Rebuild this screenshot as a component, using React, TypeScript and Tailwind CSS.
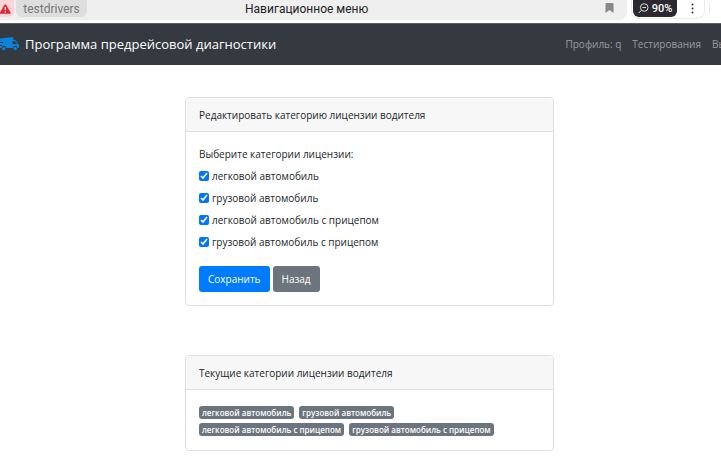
import React from 'react';

const categories = [
  'легковой автомобиль',
  'грузовой автомобиль',
  'легковой автомобиль с прицепом',
  'грузовой автомобиль с прицепом',
];

function BrowserBar() {
  return (
    <div className="flex h-[23px] items-start overflow-hidden bg-white font-[Roboto,sans-serif]">
      <div className="flex h-5 min-w-0 flex-1 items-start rounded-br-lg bg-[#efefef]">
        <div className="flex h-[17px] w-[14px] shrink-0 items-center rounded-br-md bg-[#fdd5d8]">
          <svg width="11" height="10" viewBox="0 0 11 10" className="block" aria-hidden="true">
            <path d="M4.5 0.8 Q5.3 -0.4 6.1 0.8 L10.6 8.4 Q11 9.8 9.8 9.8 H0.8 Q-0.4 9.8 0 8.4 Z" fill="#e32633" />
            <path d="M5.3 3 V6.2 M5.3 7.3 V8.5" stroke="#fff" strokeWidth="1.2" />
          </svg>
        </div>
        <div className="ml-[2px] h-[17px] w-[71px] shrink-0 rounded-b-md bg-[#dedede] text-center text-[12px] leading-[18px] text-[#777]">
          testdrivers
        </div>
        <div className="min-w-0 flex-1 truncate pl-[158px] text-[12px] leading-[18px] text-[#222]">
          Навигационное меню
        </div>
        <button type="button" aria-label="Закладка" className="mt-[3px] mr-[13px] shrink-0">
          <svg width="9" height="10" viewBox="0 0 9 10" className="block">
            <path d="M1.5 0 H7.5 Q8.5 0 8.5 1 V10 L4.5 7 L0.5 10 V1 Q0.5 0 1.5 0Z" fill="#888" />
          </svg>
        </button>
      </div>
      <div className="ml-1 flex h-[19px] w-[74px] shrink-0 items-start rounded-b-lg border-x border-b border-[#e9e9e9] pl-[1px]">
        <button type="button" className="flex h-[17px] w-[44px] items-center justify-center gap-[3px] rounded-b-md bg-[#29292f] text-[11px] leading-[17px] font-medium text-white">
          <svg width="11" height="11" viewBox="0 0 11 11" fill="none" stroke="#ddd" strokeWidth="1" aria-hidden="true">
            <circle cx="6.2" cy="4.5" r="3.8" />
            <path d="M3.4 7.3 L0.7 10 M4.4 4.5 H8" />
          </svg>
          90%
        </button>
        <button type="button" aria-label="Ещё" className="ml-[14px] mt-[3px]">
          <svg width="3" height="11" viewBox="0 0 3 11" fill="#333" className="block">
            <circle cx="1.5" cy="1.5" r="1" />
            <circle cx="1.5" cy="5.5" r="1" />
            <circle cx="1.5" cy="9.5" r="1" />
          </svg>
        </button>
      </div>
      <div className="ml-1 mr-[11px] mt-[2px] h-3 w-px shrink-0 bg-[#e9e9e9]" />
    </div>
  );
}

function Navbar() {
  return (
    <nav className="flex h-[42px] items-center overflow-hidden border-t border-[#5c6065] bg-[#343a40] pb-[2px] whitespace-nowrap">
      <a href="#home" className="flex shrink-0 items-center text-[13px] leading-5 text-white">
        <svg width="19" height="14" viewBox="0 0 19 14" className="mr-[6px] block" aria-hidden="true">
          <path d="M0 1.5 L13 0 L13.5 3 L16 3.5 L18 7 L19 8 V11 H17.5 A2.2 2.2 0 0 0 13 11 H6 A2.2 2.2 0 0 0 1.6 11 H0 V9 H2 V8 H0 V6 H3 V5 H0 Z" fill="#0b83dc" />
          <path d="M12.5 4.3 H15.3 L16.8 7 H12.5 Z" fill="#343a40" />
          <circle cx="3.8" cy="11.6" r="1.7" fill="#0b83dc" />
          <circle cx="15.2" cy="11.6" r="1.7" fill="#0b83dc" />
        </svg>
        Программа предрейсовой диагностики
      </a>
      <div className="flex min-w-0 flex-1 justify-end overflow-hidden text-[10px] leading-5 text-[#999da0]">
        <a href="#profile" className="mr-[11px]">Профиль: q</a>
        <a href="#tests" className="mr-[11px]">Тестирования</a>
        <a href="#logout" className="w-[9px] overflow-hidden">Выход</a>
      </div>
    </nav>
  );
}

function Card({ title, children }: { title: string; children: React.ReactNode }) {
  return (
    <section className="overflow-hidden rounded-[4px] border border-[#dfdfdf] bg-white">
      <h2 className="border-b border-[#dfdfdf] bg-[#f7f7f7] px-[13px] pt-[9px] pb-[7px] text-[10px] leading-[17px]">{title}</h2>
      {children}
    </section>
  );
}

export default function App() {
  return (
    <div className="min-h-screen bg-white font-['Open_Sans','Noto_Sans',sans-serif] text-[#212529]">
      <BrowserBar />
      <Navbar />
      <main className="ml-[185px] flex max-w-[369px] flex-col gap-[49px] pt-8">
        <Card title="Редактировать категорию лицензии водителя">
          <form className="px-[13px] py-[13px] text-[10px] leading-[18px]" onSubmit={(e) => e.preventDefault()}>
            <fieldset className="flex flex-col items-start gap-1">
              <legend className="mb-1">Выберите категории лицензии:</legend>
              {categories.map((name) => (
                <label key={name} className="flex items-center gap-[3px]">
                  <input type="checkbox" defaultChecked className="size-[10px] accent-[#0075ff]" />
                  {name}
                </label>
              ))}
            </fieldset>
            <div className="mt-[15px] flex gap-[3px] text-white">
              <button type="submit" className="h-[26px] rounded-[3px] bg-[#007bff] px-[9px]">Сохранить</button>
              <button type="button" className="h-[26px] rounded-[3px] bg-[#6c757d] px-[9px]">Назад</button>
            </div>
          </form>
        </Card>
        <Card title="Текущие категории лицензии водителя">
          <div className="flex flex-wrap gap-x-[5px] gap-y-1 pt-4 pr-9 pb-[14px] pl-[13px]">
            {categories.map((name) => (
              <span key={name} className="h-[13px] rounded-[3px] bg-[#6c757d] px-[3px] text-[8px] leading-[13px] font-semibold text-white">
                {name}
              </span>
            ))}
          </div>
        </Card>
      </main>
    </div>
  );
}
